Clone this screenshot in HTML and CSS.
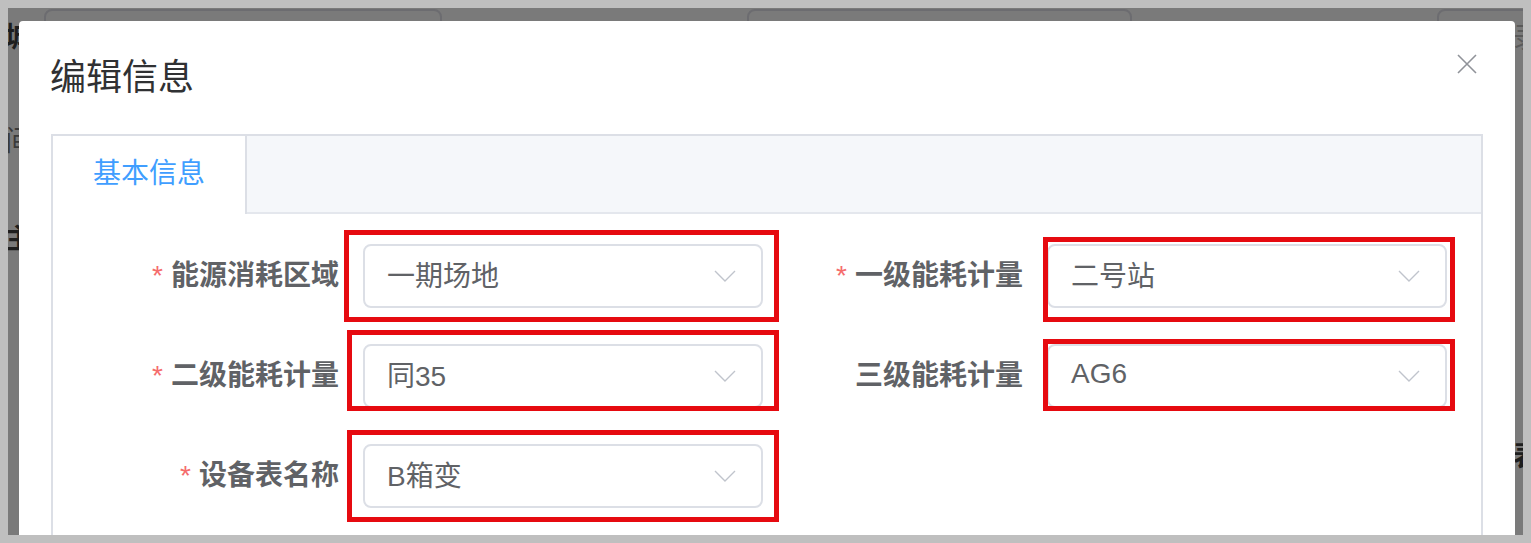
FILE: index.html
```html
<!DOCTYPE html>
<html lang="zh-CN">
<head>
    <meta charset="UTF-8">
    <meta name="viewport" content="width=device-width, initial-scale=1.0">
    <title>编辑信息</title>
    <link rel="stylesheet" href="styles.css">
</head>
<body>
    <div class="backdrop">
        <!-- page underneath the modal -->
        <div class="top-strip">
            <div class="ghost-input ghost-1"></div>
            <div class="ghost-input ghost-2"></div>
            <div class="ghost-input ghost-3"></div>
        </div>

        <div class="middle">
            <div class="side side-left">
                <span class="ghost-text g-1">城</span>
                <span class="ghost-text g-2">间</span>
                <span class="ghost-text g-3">主</span>
            </div>

            <div class="dialog">
                <div class="dialog-header">
                    <span class="dialog-title">编辑信息</span>
                    <button class="dialog-close" aria-label="关闭">
                        <svg width="20" height="20" viewBox="0 0 20 20">
                            <path d="M1 1 L19 19 M19 1 L1 19" stroke="#909399" stroke-width="1.6" fill="none"/>
                        </svg>
                    </button>
                </div>

                <div class="dialog-body">
                    <div class="tabs">
                        <div class="tabs-header">
                            <div class="tab active">基本信息</div>
                        </div>

                        <div class="tabs-content">
                            <div class="form-grid">
                                <div class="form-item">
                                    <label class="form-label required">能源消耗区域</label>
                                    <div class="select">
                                        <span class="select-value">一期场地</span>
                                        <svg class="arrow" width="22" height="12" viewBox="0 0 22 12"><polyline points="1,1 11,11 21,1" stroke="#c0c4cc" stroke-width="1.4" fill="none"/></svg>
                                        <div class="mark mark-1"></div>
                                    </div>
                                </div>
                                <div class="form-item">
                                    <label class="form-label required">一级能耗计量</label>
                                    <div class="select">
                                        <span class="select-value">二号站</span>
                                        <svg class="arrow" width="22" height="12" viewBox="0 0 22 12"><polyline points="1,1 11,11 21,1" stroke="#c0c4cc" stroke-width="1.4" fill="none"/></svg>
                                        <div class="mark mark-2"></div>
                                    </div>
                                </div>
                                <div class="form-item">
                                    <label class="form-label required">二级能耗计量</label>
                                    <div class="select">
                                        <span class="select-value">同35</span>
                                        <svg class="arrow" width="22" height="12" viewBox="0 0 22 12"><polyline points="1,1 11,11 21,1" stroke="#c0c4cc" stroke-width="1.4" fill="none"/></svg>
                                        <div class="mark mark-3"></div>
                                    </div>
                                </div>
                                <div class="form-item">
                                    <label class="form-label">三级能耗计量</label>
                                    <div class="select">
                                        <span class="select-value">AG6</span>
                                        <svg class="arrow" width="22" height="12" viewBox="0 0 22 12"><polyline points="1,1 11,11 21,1" stroke="#c0c4cc" stroke-width="1.4" fill="none"/></svg>
                                        <div class="mark mark-4"></div>
                                    </div>
                                </div>
                                <div class="form-item">
                                    <label class="form-label required">设备表名称</label>
                                    <div class="select">
                                        <span class="select-value">B箱变</span>
                                        <svg class="arrow" width="22" height="12" viewBox="0 0 22 12"><polyline points="1,1 11,11 21,1" stroke="#c0c4cc" stroke-width="1.4" fill="none"/></svg>
                                        <div class="mark mark-5"></div>
                                    </div>
                                </div>
                            </div>
                        </div>
                    </div>
                </div>
            </div>

            <div class="side side-right">
                <span class="ghost-text g-4">录</span>
                <span class="ghost-text g-5">表</span>
            </div>
        </div>
    </div>
</body>
</html>
```

FILE: styles.css
```css
body {
    margin: 0;
    padding: 8px;
    background-color: #bfbfbf;
    font-family: "Liberation Sans", "Noto Sans CJK SC", sans-serif;
}
/* Dimmed page behind the dialog */
.backdrop {
    height: 527px;
    background-color: #7a7a7a;
    overflow: hidden;
    display: flex;
    flex-direction: column;
}
.top-strip {
    height: 13px;
    flex-shrink: 0;
    display: flex;
    overflow: hidden;
}
.ghost-input {
    flex-shrink: 0;
    height: 20px;
    margin-top: 1px;
    border: 2px solid #6c6c70;
    border-radius: 8px;
    box-sizing: border-box;
}
.ghost-1 {
    margin-left: 36px;
    width: 398px;
}
.ghost-2 {
    margin-left: 305px;
    width: 385px;
}
.ghost-3 {
    margin-left: 305px;
    width: 120px;
}
.middle {
    display: flex;
    flex: 1;
}
.side {
    display: flex;
    flex-direction: column;
    overflow: hidden;
    flex-shrink: 0;
}
.side-left {
    width: 11px;
    align-items: flex-end;
}
.side-right {
    width: 8px;
    align-items: flex-start;
}
.ghost-text {
    font-size: 28px;
    font-weight: bold;
    line-height: 28px;
    color: #1e1e1e;
}
.side-left .ghost-text {
    margin-right: -14px;
}
.side-right .ghost-text {
    margin-left: -2px;
}
.g-1 { margin-top: 3px; }
.g-2 { margin-top: 76px; color: #3a3a3a; font-weight: normal; }
.g-3 { margin-top: 70px; }
.g-4 { margin-top: 4px; color: #5a5a5a; font-weight: normal; }
.g-5 { margin-top: 390px; }

/* Dialog */
.dialog {
    flex: 1;
    background-color: #fff;
    border-radius: 4px 4px 0 0;
    height: 700px;
}
.dialog-header {
    display: flex;
    justify-content: space-between;
    align-items: flex-start;
    padding: 39px 38px 0 31px;
}
.dialog-title {
    font-size: 36px;
    line-height: 36px;
    color: #303133;
}
.dialog-close {
    margin-top: -6px;
    padding: 0;
    border: none;
    background: none;
    width: 20px;
    height: 20px;
    cursor: pointer;
}
.dialog-close svg {
    display: block;
}
.dialog-body {
    padding: 38px 32px 0 32px;
}

/* Border card tabs */
.tabs {
    border: 2px solid #dcdfe6;
    border-bottom: none;
}
.tabs-header {
    display: flex;
    background-color: #f5f7fa;
    border-bottom: 2px solid #e4e7ed;
    height: 76px;
}
.tab {
    padding: 0 40px;
    font-size: 28px;
    line-height: 76px;
    color: #606266;
}
.tab.active {
    color: #409eff;
    background-color: #fff;
    border-right: 2px solid #dcdfe6;
    height: 78px;
}
.tabs-content {
    padding: 30px 30px 60px 30px;
}

/* Form */
.form-grid {
    display: grid;
    grid-template-columns: 1fr 1fr;
    row-gap: 36px;
}
.form-item {
    display: flex;
    align-items: center;
}
.form-label {
    width: 280px;
    box-sizing: border-box;
    padding-right: 24px;
    text-align: right;
    font-size: 28px;
    font-weight: bold;
    line-height: 64px;
    color: #606266;
}
.form-label.required::before {
    content: "*";
    color: #f56c6c;
    margin-right: 8px;
    font-weight: normal;
}
.select {
    position: relative;
    width: 400px;
    height: 64px;
    box-sizing: border-box;
    border: 2px solid #dcdfe6;
    border-radius: 8px;
    display: flex;
    align-items: center;
    justify-content: space-between;
    padding: 0 25px 0 22px;
}
.select-value {
    font-size: 28px;
    color: #606266;
    margin-bottom: 5px;
}
.arrow {
    display: block;
}
/* Red highlight marks drawn over the screenshot */
.mark {
    position: absolute;
    border: 5px solid #e60a10;
    box-sizing: border-box;
}
.mark-1 { left: -21px; top: -16px; width: 435px; height: 92px; }
.mark-2 { left: -6px; top: -9px; width: 412px; height: 85px; }
.mark-3 { left: -18px; top: -16px; width: 432px; height: 81px; }
.mark-4 { left: -6px; top: -7px; width: 412px; height: 72px; }
.mark-5 { left: -18px; top: -16px; width: 432px; height: 92px; }
```
